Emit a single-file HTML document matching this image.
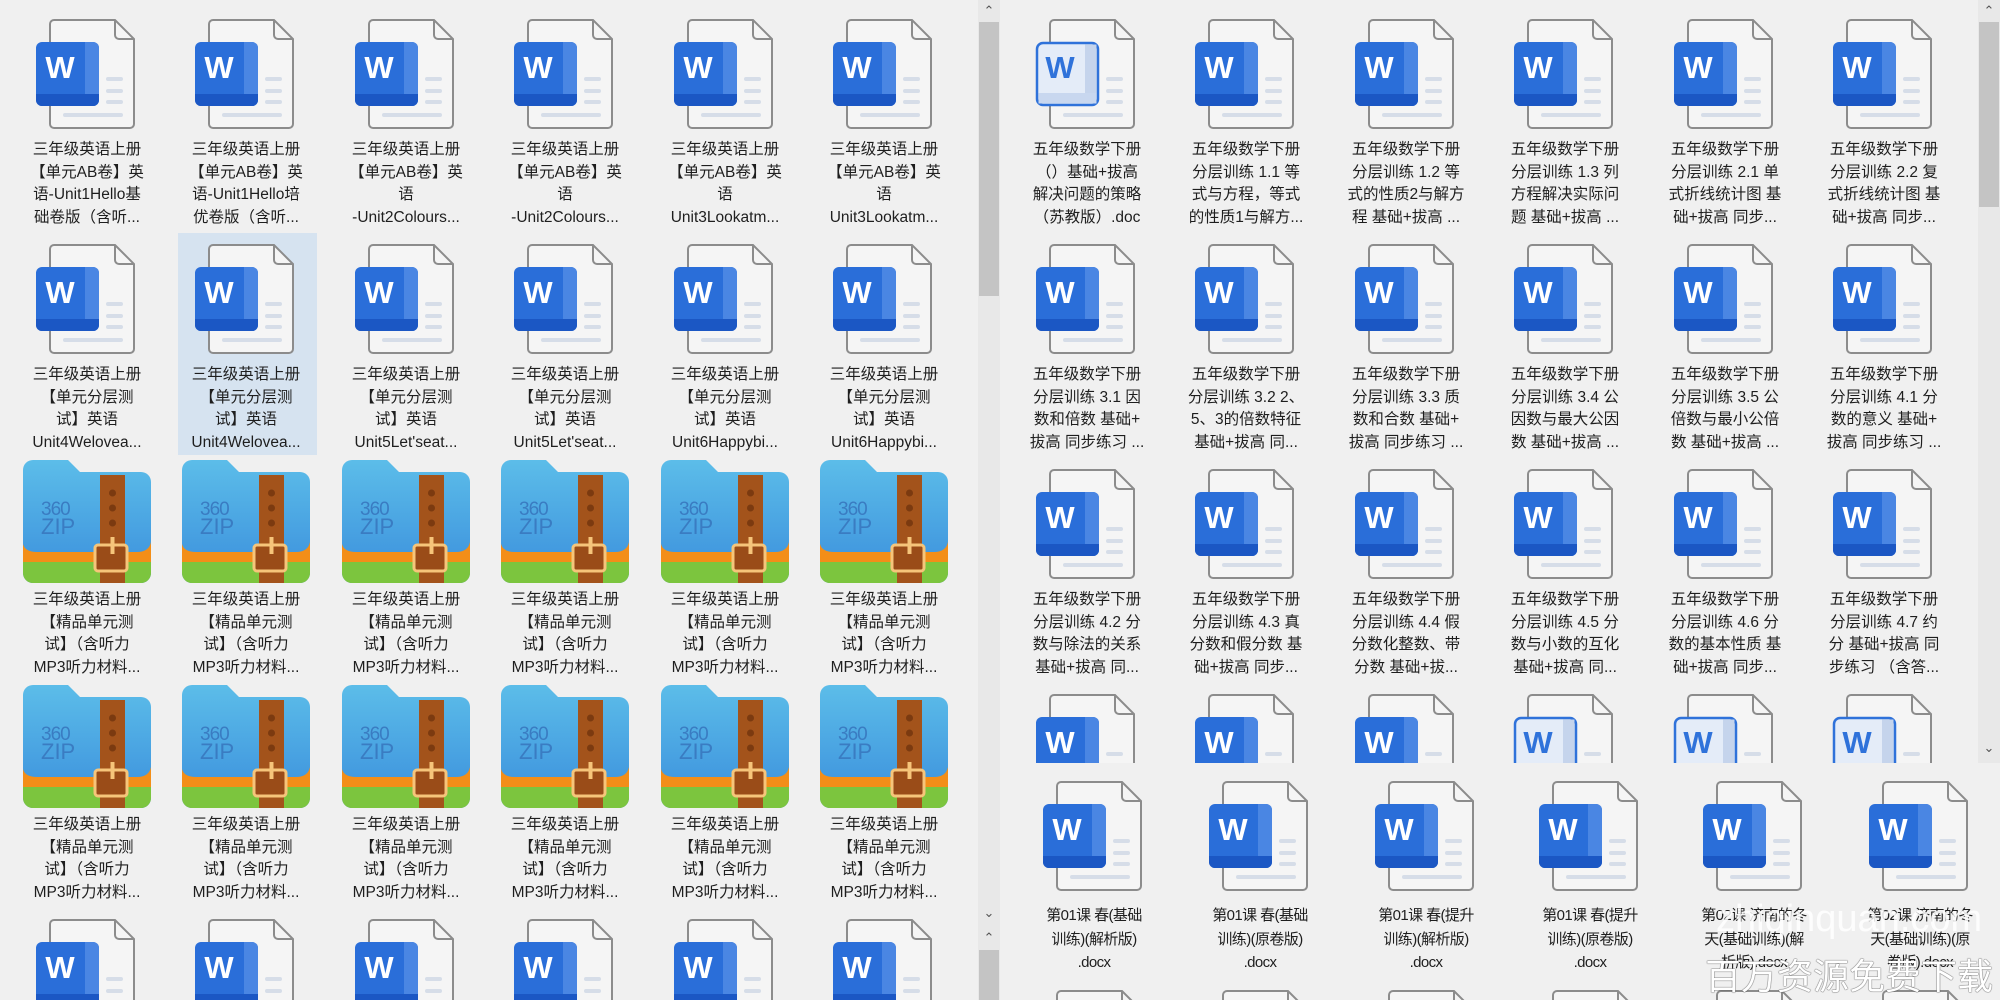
<!DOCTYPE html>
<html><head><meta charset="utf-8">
<style>
*{margin:0;padding:0;box-sizing:border-box}
html{overflow:hidden;width:2000px;height:1000px}
body{width:2000px;height:1000px;overflow:hidden;background:#f0f0f0;font-family:"Liberation Sans","Noto Sans CJK SC",sans-serif;color:#1e1e1e;position:relative}
.pane{position:absolute;overflow:hidden}
.it{position:absolute;width:160px;height:10px}
.it svg.w{position:absolute;left:28px;top:0;width:100px;height:110px}
.it svg.z{position:absolute;left:16px;top:-9px;width:128px;height:123px}
.t{position:absolute;left:-10px;top:120px;width:180px;text-align:center;font-size:15.5px;line-height:22.5px;white-space:nowrap}
.ov .t{top:125px;font-size:15px;letter-spacing:-0.6px;line-height:23.5px}
.sel{position:absolute;left:178px;top:233px;width:139px;height:222px;background:#d6e3f0}
.arr{position:absolute;font-size:13px;color:#555;width:20px;text-align:center}
</style></head><body>
<svg width="0" height="0" style="position:absolute">
<defs>
<symbol id="pg" viewBox="0 0 100 110">
<path d="M19,1 H80 L99,20 V105 a4 4 0 0 1 -4 4 H19 a4 4 0 0 1 -4 -4 V5 a4 4 0 0 1 4 -4Z" fill="#f5f5f5" stroke="#8c8c8c" stroke-width="2"/>
<path d="M80,1 V16 a4 4 0 0 0 4 4 H99" fill="none" stroke="#8c8c8c" stroke-width="2"/>
<rect x="71" y="58" width="17" height="4" rx="2" fill="#d6dde8"/>
<rect x="71" y="70" width="17" height="4" rx="2" fill="#d6dde8"/>
<rect x="71" y="81" width="17" height="4" rx="2" fill="#d6dde8"/>
<rect x="28" y="94" width="60" height="4" rx="2" fill="#d6dde8"/>
</symbol>
<symbol id="w" viewBox="0 0 100 110">
<use href="#pg"/>
<rect x="1" y="23" width="63" height="64" rx="6" fill="#2a6ed9"/>
<path d="M50,23 H58 a6 6 0 0 1 6 6 V81 a6 6 0 0 1 -6 6 H50Z" fill="#4a86e3"/>
<path d="M1,75 H64 V81 a6 6 0 0 1 -6 6 H7 a6 6 0 0 1 -6 -6Z" fill="#1b57c4"/>
<text x="25" y="59" font-family="Liberation Sans" font-weight="bold" font-size="31" fill="#fff" text-anchor="middle">W</text>
</symbol>
<symbol id="wo" viewBox="0 0 100 110">
<use href="#pg"/>
<rect x="2" y="24" width="61" height="62" rx="6" fill="#e4ecf8" stroke="#2f72da" stroke-width="2.5"/>
<rect x="50" y="25.5" width="11.5" height="59" fill="#c5d4ec"/>
<rect x="3.5" y="74" width="58" height="10.5" fill="#c8d7ef"/>
<text x="25" y="59" font-family="Liberation Sans" font-weight="bold" font-size="31" fill="#2f72da" text-anchor="middle">W</text>
</symbol>
<linearGradient id="bg" x1="0" y1="0" x2="0" y2="1"><stop offset="0" stop-color="#5cbde9"/><stop offset="1" stop-color="#3a8edc"/></linearGradient>
<clipPath id="zc"><path d="M10,0 H45 L57,12 H118 a10 10 0 0 1 10 10 V113 a10 10 0 0 1 -10 10 H10 a10 10 0 0 1 -10 -10 V10 a10 10 0 0 1 10 -10Z"/></clipPath>
<symbol id="z" viewBox="0 0 128 123">
<g clip-path="url(#zc)">
<rect width="128" height="123" fill="url(#bg)"/>
<path d="M0,84 Q2,92 14,92 H114 Q126,92 128,82 V104 H0Z" fill="#f38e18"/>
<rect x="0" y="102" width="128" height="21" fill="#7cc53e"/>
<rect x="77" y="15" width="25" height="108" fill="#a3531b"/>
</g>
<circle cx="89.5" cy="33" r="3.5" fill="#7b3a10"/>
<circle cx="89.5" cy="48" r="3.5" fill="#7b3a10"/>
<circle cx="89.5" cy="63" r="3.5" fill="#7b3a10"/>
<rect x="72" y="85" width="32" height="26" rx="3" fill="#9a4c18" stroke="#f6c57a" stroke-width="3"/>
<rect x="87.5" y="77" width="4" height="17" fill="#f6c57a"/>
<text x="18" y="55" font-family="Liberation Sans" font-size="19" fill="#3a7cc2" letter-spacing="-1">360</text>
<text x="18" y="74" font-family="Liberation Sans" font-size="22" fill="#3a7cc2">ZIP</text>
</symbol>
</defs>
</svg>

<!-- LEFT PANE -->
<div class="pane" style="left:0;top:0;width:978px;height:1000px">
<div class="sel"></div>
<div class="it" style="left:7px;top:19px"><svg class="w"><use href="#w"/></svg><div class="t">三年级英语上册<br>【单元AB卷】英<br>语-Unit1Hello基<br>础卷版（含听...</div></div>
<div class="it" style="left:166px;top:19px"><svg class="w"><use href="#w"/></svg><div class="t">三年级英语上册<br>【单元AB卷】英<br>语-Unit1Hello培<br>优卷版（含听...</div></div>
<div class="it" style="left:326px;top:19px"><svg class="w"><use href="#w"/></svg><div class="t">三年级英语上册<br>【单元AB卷】英<br>语<br>-Unit2Colours...</div></div>
<div class="it" style="left:485px;top:19px"><svg class="w"><use href="#w"/></svg><div class="t">三年级英语上册<br>【单元AB卷】英<br>语<br>-Unit2Colours...</div></div>
<div class="it" style="left:645px;top:19px"><svg class="w"><use href="#w"/></svg><div class="t">三年级英语上册<br>【单元AB卷】英<br>语<br>Unit3Lookatm...</div></div>
<div class="it" style="left:804px;top:19px"><svg class="w"><use href="#w"/></svg><div class="t">三年级英语上册<br>【单元AB卷】英<br>语<br>Unit3Lookatm...</div></div>

<div class="it" style="left:7px;top:244px"><svg class="w"><use href="#w"/></svg><div class="t">三年级英语上册<br>【单元分层测<br>试】英语<br>Unit4Welovea...</div></div>
<div class="it" style="left:166px;top:244px"><svg class="w"><use href="#w"/></svg><div class="t">三年级英语上册<br>【单元分层测<br>试】英语<br>Unit4Welovea...</div></div>
<div class="it" style="left:326px;top:244px"><svg class="w"><use href="#w"/></svg><div class="t">三年级英语上册<br>【单元分层测<br>试】英语<br>Unit5Let'seat...</div></div>
<div class="it" style="left:485px;top:244px"><svg class="w"><use href="#w"/></svg><div class="t">三年级英语上册<br>【单元分层测<br>试】英语<br>Unit5Let'seat...</div></div>
<div class="it" style="left:645px;top:244px"><svg class="w"><use href="#w"/></svg><div class="t">三年级英语上册<br>【单元分层测<br>试】英语<br>Unit6Happybi...</div></div>
<div class="it" style="left:804px;top:244px"><svg class="w"><use href="#w"/></svg><div class="t">三年级英语上册<br>【单元分层测<br>试】英语<br>Unit6Happybi...</div></div>

<div class="it" style="left:7px;top:469px"><svg class="z"><use href="#z"/></svg><div class="t">三年级英语上册<br>【精品单元测<br>试】（含听力<br>MP3听力材料...</div></div>
<div class="it" style="left:166px;top:469px"><svg class="z"><use href="#z"/></svg><div class="t">三年级英语上册<br>【精品单元测<br>试】（含听力<br>MP3听力材料...</div></div>
<div class="it" style="left:326px;top:469px"><svg class="z"><use href="#z"/></svg><div class="t">三年级英语上册<br>【精品单元测<br>试】（含听力<br>MP3听力材料...</div></div>
<div class="it" style="left:485px;top:469px"><svg class="z"><use href="#z"/></svg><div class="t">三年级英语上册<br>【精品单元测<br>试】（含听力<br>MP3听力材料...</div></div>
<div class="it" style="left:645px;top:469px"><svg class="z"><use href="#z"/></svg><div class="t">三年级英语上册<br>【精品单元测<br>试】（含听力<br>MP3听力材料...</div></div>
<div class="it" style="left:804px;top:469px"><svg class="z"><use href="#z"/></svg><div class="t">三年级英语上册<br>【精品单元测<br>试】（含听力<br>MP3听力材料...</div></div>

<div class="it" style="left:7px;top:694px"><svg class="z"><use href="#z"/></svg><div class="t">三年级英语上册<br>【精品单元测<br>试】（含听力<br>MP3听力材料...</div></div>
<div class="it" style="left:166px;top:694px"><svg class="z"><use href="#z"/></svg><div class="t">三年级英语上册<br>【精品单元测<br>试】（含听力<br>MP3听力材料...</div></div>
<div class="it" style="left:326px;top:694px"><svg class="z"><use href="#z"/></svg><div class="t">三年级英语上册<br>【精品单元测<br>试】（含听力<br>MP3听力材料...</div></div>
<div class="it" style="left:485px;top:694px"><svg class="z"><use href="#z"/></svg><div class="t">三年级英语上册<br>【精品单元测<br>试】（含听力<br>MP3听力材料...</div></div>
<div class="it" style="left:645px;top:694px"><svg class="z"><use href="#z"/></svg><div class="t">三年级英语上册<br>【精品单元测<br>试】（含听力<br>MP3听力材料...</div></div>
<div class="it" style="left:804px;top:694px"><svg class="z"><use href="#z"/></svg><div class="t">三年级英语上册<br>【精品单元测<br>试】（含听力<br>MP3听力材料...</div></div>

<div class="it" style="left:7px;top:919px"><svg class="w"><use href="#w"/></svg></div>
<div class="it" style="left:166px;top:919px"><svg class="w"><use href="#w"/></svg></div>
<div class="it" style="left:326px;top:919px"><svg class="w"><use href="#w"/></svg></div>
<div class="it" style="left:485px;top:919px"><svg class="w"><use href="#w"/></svg></div>
<div class="it" style="left:645px;top:919px"><svg class="w"><use href="#w"/></svg></div>
<div class="it" style="left:804px;top:919px"><svg class="w"><use href="#w"/></svg></div>
</div>

<!-- left scrollbar -->
<div style="position:absolute;left:978px;top:0;width:22px;height:1000px;background:#e8e8e8"></div>
<div style="position:absolute;left:979px;top:22px;width:20px;height:274px;background:#c4c4c4"></div>
<div class="arr" style="left:979px;top:3px">&#8963;</div>
<div class="arr" style="left:979px;top:905px">&#8964;</div>
<div class="arr" style="left:979px;top:930px">&#8963;</div>
<div style="position:absolute;left:979px;top:950px;width:20px;height:50px;background:#c4c4c4"></div>

<!-- RIGHT PANE -->
<div class="pane" style="left:1000px;top:0;width:978px;height:763px">
<div class="it" style="left:7px;top:19px"><svg class="w"><use href="#wo"/></svg><div class="t">五年级数学下册<br>（）基础+拔高<br>解决问题的策略<br>（苏教版）.doc</div></div>
<div class="it" style="left:166px;top:19px"><svg class="w"><use href="#w"/></svg><div class="t">五年级数学下册<br>分层训练 1.1 等<br>式与方程，等式<br>的性质1与解方...</div></div>
<div class="it" style="left:326px;top:19px"><svg class="w"><use href="#w"/></svg><div class="t">五年级数学下册<br>分层训练 1.2 等<br>式的性质2与解方<br>程 基础+拔高 ...</div></div>
<div class="it" style="left:485px;top:19px"><svg class="w"><use href="#w"/></svg><div class="t">五年级数学下册<br>分层训练 1.3 列<br>方程解决实际问<br>题 基础+拔高 ...</div></div>
<div class="it" style="left:645px;top:19px"><svg class="w"><use href="#w"/></svg><div class="t">五年级数学下册<br>分层训练 2.1 单<br>式折线统计图 基<br>础+拔高 同步...</div></div>
<div class="it" style="left:804px;top:19px"><svg class="w"><use href="#w"/></svg><div class="t">五年级数学下册<br>分层训练 2.2 复<br>式折线统计图 基<br>础+拔高 同步...</div></div>

<div class="it" style="left:7px;top:244px"><svg class="w"><use href="#w"/></svg><div class="t">五年级数学下册<br>分层训练 3.1 因<br>数和倍数 基础+<br>拔高 同步练习 ...</div></div>
<div class="it" style="left:166px;top:244px"><svg class="w"><use href="#w"/></svg><div class="t">五年级数学下册<br>分层训练 3.2 2、<br>5、3的倍数特征<br>基础+拔高 同...</div></div>
<div class="it" style="left:326px;top:244px"><svg class="w"><use href="#w"/></svg><div class="t">五年级数学下册<br>分层训练 3.3 质<br>数和合数 基础+<br>拔高 同步练习 ...</div></div>
<div class="it" style="left:485px;top:244px"><svg class="w"><use href="#w"/></svg><div class="t">五年级数学下册<br>分层训练 3.4 公<br>因数与最大公因<br>数 基础+拔高 ...</div></div>
<div class="it" style="left:645px;top:244px"><svg class="w"><use href="#w"/></svg><div class="t">五年级数学下册<br>分层训练 3.5 公<br>倍数与最小公倍<br>数 基础+拔高 ...</div></div>
<div class="it" style="left:804px;top:244px"><svg class="w"><use href="#w"/></svg><div class="t">五年级数学下册<br>分层训练 4.1 分<br>数的意义 基础+<br>拔高 同步练习 ...</div></div>

<div class="it" style="left:7px;top:469px"><svg class="w"><use href="#w"/></svg><div class="t">五年级数学下册<br>分层训练 4.2 分<br>数与除法的关系<br>基础+拔高 同...</div></div>
<div class="it" style="left:166px;top:469px"><svg class="w"><use href="#w"/></svg><div class="t">五年级数学下册<br>分层训练 4.3 真<br>分数和假分数 基<br>础+拔高 同步...</div></div>
<div class="it" style="left:326px;top:469px"><svg class="w"><use href="#w"/></svg><div class="t">五年级数学下册<br>分层训练 4.4 假<br>分数化整数、带<br>分数 基础+拔...</div></div>
<div class="it" style="left:485px;top:469px"><svg class="w"><use href="#w"/></svg><div class="t">五年级数学下册<br>分层训练 4.5 分<br>数与小数的互化<br>基础+拔高 同...</div></div>
<div class="it" style="left:645px;top:469px"><svg class="w"><use href="#w"/></svg><div class="t">五年级数学下册<br>分层训练 4.6 分<br>数的基本性质 基<br>础+拔高 同步...</div></div>
<div class="it" style="left:804px;top:469px"><svg class="w"><use href="#w"/></svg><div class="t">五年级数学下册<br>分层训练 4.7 约<br>分 基础+拔高 同<br>步练习 （含答...</div></div>

<div class="it" style="left:7px;top:694px"><svg class="w"><use href="#w"/></svg></div>
<div class="it" style="left:166px;top:694px"><svg class="w"><use href="#w"/></svg></div>
<div class="it" style="left:326px;top:694px"><svg class="w"><use href="#w"/></svg></div>
<div class="it" style="left:485px;top:694px"><svg class="w"><use href="#wo"/></svg></div>
<div class="it" style="left:645px;top:694px"><svg class="w"><use href="#wo"/></svg></div>
<div class="it" style="left:804px;top:694px"><svg class="w"><use href="#wo"/></svg></div>
</div>

<!-- right scrollbar -->
<div style="position:absolute;left:1978px;top:0;width:22px;height:763px;background:#e8e8e8"></div>
<div style="position:absolute;left:1979px;top:22px;width:20px;height:185px;background:#c4c4c4"></div>
<div class="arr" style="left:1979px;top:3px">&#8963;</div>
<div class="arr" style="left:1979px;top:740px">&#8964;</div>

<!-- OVERLAY WINDOW -->
<div class="pane ov" style="left:1000px;top:763px;width:1000px;height:237px;background:#f0f0f0">
<div class="it" style="left:14px;top:16px"><svg class="w" style="height:114px"><use href="#w"/></svg><div class="t">第01课 春(基础<br>训练)(解析版)<br>.docx</div></div>
<div class="it" style="left:180px;top:16px"><svg class="w" style="height:114px"><use href="#w"/></svg><div class="t">第01课 春(基础<br>训练)(原卷版)<br>.docx</div></div>
<div class="it" style="left:346px;top:16px"><svg class="w" style="height:114px"><use href="#w"/></svg><div class="t">第01课 春(提升<br>训练)(解析版)<br>.docx</div></div>
<div class="it" style="left:510px;top:16px"><svg class="w" style="height:114px"><use href="#w"/></svg><div class="t">第01课 春(提升<br>训练)(原卷版)<br>.docx</div></div>
<div class="it" style="left:674px;top:16px"><svg class="w" style="height:114px"><use href="#w"/></svg><div class="t">第02课 济南的冬<br>天(基础训练)(解<br>析版).docx</div></div>
<div class="it" style="left:840px;top:16px"><svg class="w" style="height:114px"><use href="#w"/></svg><div class="t">第02课 济南的冬<br>天(基础训练)(原<br>卷版).docx</div></div>
<div class="it" style="left:14px;top:227px"><svg class="w"><use href="#pg"/></svg></div>
<div class="it" style="left:180px;top:227px"><svg class="w"><use href="#pg"/></svg></div>
<div class="it" style="left:346px;top:227px"><svg class="w"><use href="#pg"/></svg></div>
<div class="it" style="left:510px;top:227px"><svg class="w"><use href="#pg"/></svg></div>
<div class="it" style="left:674px;top:227px"><svg class="w"><use href="#pg"/></svg></div>
<div class="it" style="left:840px;top:227px"><svg class="w"><use href="#pg"/></svg></div>
</div>

<!-- watermark -->
<div style="position:absolute;left:1716px;top:898px;font-size:38px;color:rgba(255,255,255,0.85);font-family:'Liberation Sans',sans-serif;white-space:nowrap">zhiqinquan.com</div>
<div style="position:absolute;left:1705px;top:948px;font-size:36px;color:#fff;font-family:'Liberation Sans','Noto Sans CJK SC',sans-serif;white-space:nowrap;text-shadow:0 0 1px #444,0 0 1px #444">百万资源免费下载</div>
</body></html>
